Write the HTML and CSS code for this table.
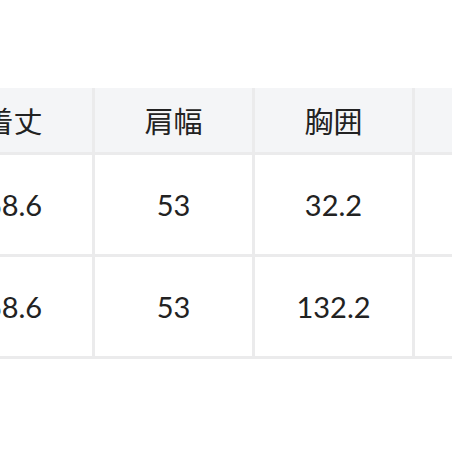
FILE: index.html
```html
<!DOCTYPE html>
<html lang="ja">
<head>
<meta charset="utf-8">
<link rel="stylesheet" href="styles.css">
</head>
<body>
<div class="scroller">
  <table class="size-table">
    <thead>
      <tr>
        <th>着丈</th>
        <th>肩幅</th>
        <th>胸囲</th>
        <th>袖丈</th>
        <th>裄丈</th>
      </tr>
    </thead>
    <tbody>
      <tr>
        <td>68.6</td>
        <td>53</td>
        <td>32.2</td>
        <td>60</td>
        <td>86</td>
      </tr>
      <tr>
        <td>68.6</td>
        <td>53</td>
        <td>132.2</td>
        <td>60</td>
        <td>86</td>
      </tr>
    </tbody>
  </table>
</div>
</body>
</html>
```
FILE: styles.css
```css
html, body {
  margin: 0;
  padding: 0;
  background: #ffffff;
}

.scroller {
  width: 452px;
  height: 452px;
  overflow: hidden;
  padding-top: 88px;
  box-sizing: border-box;
}

.size-table {
  margin-left: -65px;
  border-collapse: separate;
  border-spacing: 0;
  table-layout: fixed;
  width: 800px;
  font-family: "Lato", "Noto Sans CJK JP", sans-serif;
  font-size: 29px;
  color: #222222;
}

.size-table th,
.size-table td {
  width: 157px;
  padding: 0;
  text-align: center;
  vertical-align: middle;
  border-right: 3px solid #ebebec;
  border-bottom: 3px solid #ebebec;
}

.size-table th {
  height: 64px;
  background: #f4f5f7;
  font-weight: 400;
  font-family: "Noto Sans CJK JP", sans-serif;
}

.size-table td {
  height: 99px;
  background: #ffffff;
}
```
